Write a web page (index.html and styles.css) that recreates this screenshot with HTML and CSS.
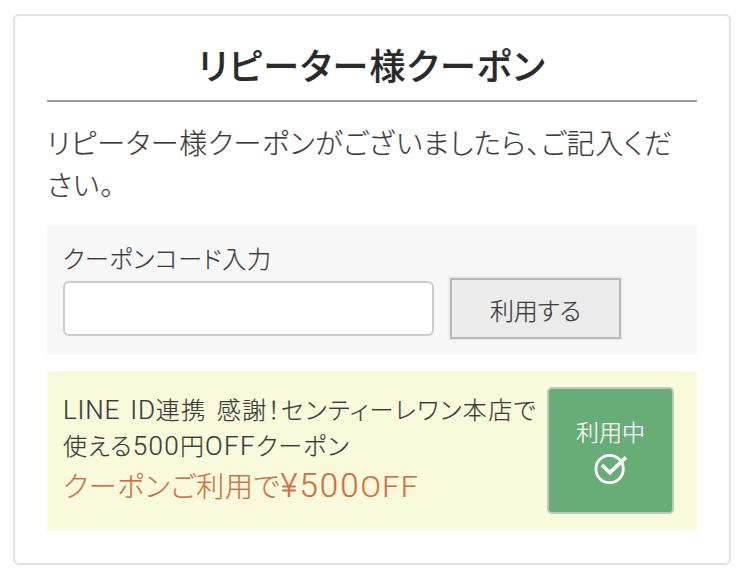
FILE: index.html
```html
<!DOCTYPE html>
<html lang="ja">
<head>
  <meta charset="UTF-8">
  <title>リピーター様クーポン</title>
  <link rel="stylesheet" href="styles.css">
</head>
<body>

  <section class="card">
    <h2>リピーター様クーポン</h2>
    <p class="lead">リピーター様クーポンがございましたら、ご記入ください。</p>

    <form class="coupon-form">
      <label for="couponCode">クーポンコード入力</label>
      <div class="form-row">
        <input type="text" id="couponCode">
        <button type="button" class="btn-use">利用する</button>
      </div>
    </form>

    <div class="coupon">
      <div class="coupon-text">
        <p class="name"><span class="line1"><span class="latin">LINE ID</span>連携 感謝！センティーレワン本店で</span><br><span class="line2">使える<span class="latin">500</span>円<span class="latin">OFF</span>クーポン</span></p>
        <p class="discount">クーポンご利用で<span class="price">¥500</span><span class="off">OFF</span></p>
      </div>
      <button type="button" class="btn-active">
        <span>利用中</span>
        <svg width="34" height="32" viewBox="0 0 34 32" fill="none" stroke="#fff">
          <circle cx="15.6" cy="17" r="13.7" stroke-width="2.8"/>
          <path d="M8 13L15.8 20.6L32 5.4" stroke-width="3.7"/>
        </svg>
      </button>
    </div>
  </section>

</body>
</html>
```
FILE: styles.css
```css
* {
  box-sizing: border-box;
}

body {
  margin: 0;
  padding: 14px 15px 14px 13px;
  background: #fff;
  color: #3a3a3a;
  font-family: Roboto, "Noto Sans CJK JP", sans-serif;
  font-weight: 300;
  font-feature-settings: "palt";
  -webkit-text-stroke: 0.2px;
}

h2, p {
  margin: 0;
}

.card {
  height: 551px;
  padding: 24px 32px 0;
  border: 2px solid #e3e3e3;
  border-radius: 6px;
}

h2 {
  height: 62px;
  border-bottom: 2px solid #999;
  text-align: center;
  font-size: 36px;
  font-weight: 500;
  line-height: 56px;
  letter-spacing: 1.2px;
  color: #2a2a2a;
}

.lead {
  padding-top: 22px;
  height: 124px;
  font-size: 28px;
  line-height: 42px;
  letter-spacing: 0.72px;
}

.coupon-form {
  height: 129px;
  padding: 16px;
  background: #f7f7f7;
}

label {
  display: block;
  height: 36px;
  font-size: 24px;
  line-height: 36px;
  letter-spacing: 0.6px;
}

.form-row {
  display: flex;
  align-items: center;
  gap: 16px;
}

input {
  width: 371px;
  height: 55px;
  border: 2px solid #ccc;
  border-radius: 6px;
  background: #fff;
}

button {
  font: inherit;
  font-feature-settings: inherit;
}

.btn-use {
  width: 171px;
  height: 61px;
  padding-top: 3px;
  border: 2px solid #b8b8b8;
  background: #ebebeb;
  color: #3a3a3a;
  font-size: 24px;
  box-shadow: 0 0 3px #ccc;
}

.coupon {
  display: flex;
  justify-content: space-between;
  height: 160px;
  margin-top: 16px;
  padding: 16px 23px 0 16px;
  background: #f9f9db;
}

.coupon-text {
  padding-top: 6px;
  white-space: nowrap;
}

.name {
  font-size: 24px;
  line-height: 36px;
}

.latin {
  font-size: 26px;
  line-height: 1;
}

.line1 {
  letter-spacing: 1.4px;
  word-spacing: 3px;
}

.line1 .latin {
  letter-spacing: 0.8px;
}

.line2 {
  letter-spacing: 1.1px;
}

.line2 .latin {
  letter-spacing: 1.3px;
}

.discount {
  padding-top: 2px;
  font-size: 28px;
  line-height: 42px;
  letter-spacing: 0.8px;
  color: #d07040;
}

.price {
  font-size: 33px;
  line-height: 1;
  letter-spacing: 2px;
}

.off {
  font-size: 30px;
  line-height: 1;
  letter-spacing: 1.5px;
}

.btn-active {
  display: flex;
  flex-direction: column;
  align-items: center;
  width: 127px;
  height: 127px;
  padding: 26px 0 0;
  border: 2px solid #bcc8b8;
  border-radius: 5px;
  background: #68ac77;
  color: #fff;
  font-size: 23px;
  line-height: 37px;
}
```
